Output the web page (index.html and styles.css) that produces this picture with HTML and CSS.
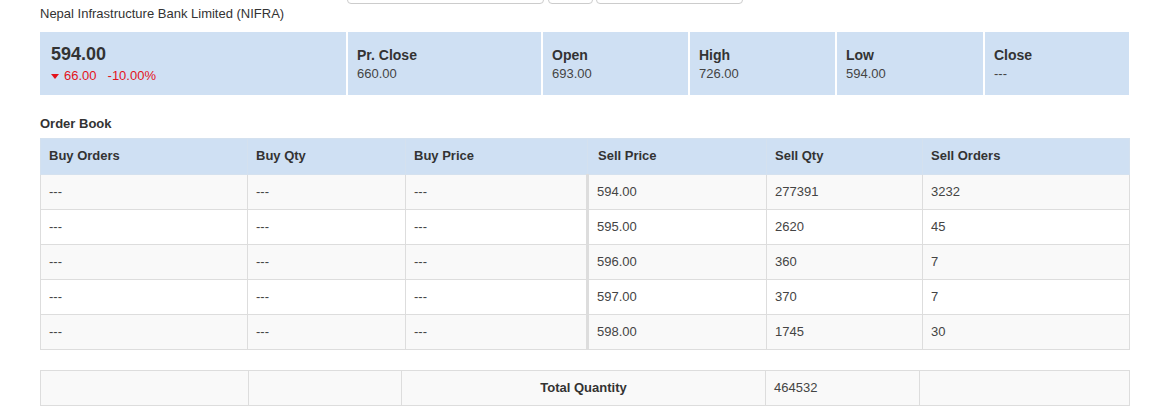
FILE: index.html
```html
<!DOCTYPE html>
<html>
<head>
<meta charset="utf-8">
<link rel="stylesheet" href="styles.css">
</head>
<body>
<div class="page">
  <div class="topbar">
    <div class="field field-a"></div>
    <div class="field field-b"></div>
    <div class="field field-c"></div>
  </div>
  <div class="title">Nepal Infrastructure Bank Limited (NIFRA)</div>

  <div class="summary">
    <div class="cell first">
      <div class="ltp">594.00</div>
      <div class="change"><span class="caret"></span><span>66.00</span><span class="pct">-10.00%</span></div>
    </div>
    <div class="cell"><div class="label">Pr. Close</div><div class="value">660.00</div></div>
    <div class="cell"><div class="label">Open</div><div class="value">693.00</div></div>
    <div class="cell"><div class="label">High</div><div class="value">726.00</div></div>
    <div class="cell"><div class="label">Low</div><div class="value">594.00</div></div>
    <div class="cell"><div class="label">Close</div><div class="value">---</div></div>
  </div>

  <div class="section-title">Order Book</div>
  <table class="book">
    <colgroup>
      <col class="c1"><col class="c2"><col class="c3"><col class="c4"><col class="c5"><col class="c6">
    </colgroup>
    <thead>
      <tr><th>Buy Orders</th><th>Buy Qty</th><th>Buy Price</th><th class="sell">Sell Price</th><th>Sell Qty</th><th>Sell Orders</th></tr>
    </thead>
    <tbody>
      <tr><td>---</td><td>---</td><td>---</td><td class="sell">594.00</td><td>277391</td><td>3232</td></tr>
      <tr><td>---</td><td>---</td><td>---</td><td class="sell">595.00</td><td>2620</td><td>45</td></tr>
      <tr><td>---</td><td>---</td><td>---</td><td class="sell">596.00</td><td>360</td><td>7</td></tr>
      <tr><td>---</td><td>---</td><td>---</td><td class="sell">597.00</td><td>370</td><td>7</td></tr>
      <tr><td>---</td><td>---</td><td>---</td><td class="sell">598.00</td><td>1745</td><td>30</td></tr>
    </tbody>
  </table>

  <table class="totals">
    <colgroup>
      <col class="t1"><col class="t2"><col class="t3"><col class="t4"><col class="t5">
    </colgroup>
    <tbody>
      <tr><td></td><td></td><td class="total-label">Total Quantity</td><td>464532</td><td></td></tr>
    </tbody>
  </table>
</div>
</body>
</html>
```

FILE: styles.css
```css
html, body {
  margin: 0;
  padding: 0;
  background: #fff;
}
body {
  font-family: "Liberation Sans", Arial, sans-serif;
  font-size: 13px;
  color: #333;
  overflow: hidden;
}
.page {
  width: 1089px;
  padding-left: 40px;
}
.topbar {
  display: flex;
  height: 30px;
  margin-top: -26px;
  padding-left: 307px;
}
.field {
  box-sizing: border-box;
  height: 30px;
  border: 1px solid #ccc;
  border-radius: 4px;
  background: #fff;
}
.field-a { width: 197px; }
.field-b { width: 45px; margin-left: 4px; }
.field-c { width: 147px; margin-left: 3px; }

.title {
  margin-top: 2px;
  line-height: 15px;
  color: #333;
}

.summary {
  margin-top: 11px;
  display: grid;
  grid-template-columns: 306px 193px 145px 145px 146px 1fr;
  column-gap: 2px;
  background: #fff;
  height: 63px;
}
.cell {
  background: #cfe0f3;
  padding: 15px 9px 0 9px;
}
.cell.first {
  padding: 12px 11px 0 11px;
}
.ltp {
  font-size: 18px;
  font-weight: bold;
  line-height: 21px;
  color: #333;
}
.change {
  display: flex;
  align-items: center;
  margin-top: 2px;
  line-height: 17px;
  color: #e3131b;
}
.caret {
  width: 0;
  height: 0;
  border-left: 4px solid transparent;
  border-right: 4px solid transparent;
  border-top: 5px solid #e3131b;
  margin-right: 5px;
  margin-top: 1px;
}
.pct {
  margin-left: 11px;
}
.label {
  font-size: 14px;
  font-weight: bold;
  line-height: 17px;
  color: #333;
}
.value {
  margin-top: 1px;
  line-height: 17px;
  color: #444;
}

.section-title {
  margin-top: 20px;
  font-weight: bold;
  line-height: 18px;
  color: #333;
}

table {
  border-collapse: collapse;
  width: 1089px;
  table-layout: fixed;
}
.book {
  margin-top: 5px;
}
.c1 { width: 207px; }
.c2 { width: 158px; }
.c3 { width: 182px; }
.c4 { width: 179px; }
.c5 { width: 156px; }
.c6 { width: 207px; }

th, td {
  border: 1px solid #ddd;
  text-align: left;
  line-height: 18px;
  padding: 8px 8px;
}
th {
  background: #cfe0f3;
  font-weight: bold;
  color: #333;
  padding: 8px 8px 9px 8px;
  border-color: #d4e1ef;
}
td {
  color: #444;
}
.book th.sell {
  padding-left: 10px;
}
.book tbody tr:nth-child(odd) td {
  background: #f9f9f9;
}
.book tbody tr:nth-child(even) td {
  background: #fff;
}
.book td.sell {
  border-left: 3px solid #ddd;
  padding-left: 8px;
}

.totals {
  margin-top: 20px;
}
.totals td {
  background: #f9f9f9;
}
.t1 { width: 208px; }
.t2 { width: 153px; }
.t3 { width: 364px; }
.t4 { width: 154px; }
.t5 { width: 210px; }
.total-label {
  text-align: center;
  font-weight: bold;
  color: #333;
}
```
